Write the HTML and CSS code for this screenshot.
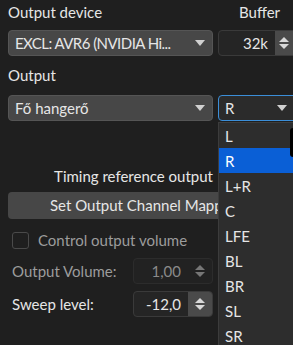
FILE: index.html
```html
<!DOCTYPE html>
<html>
<head>
<meta charset="utf-8">
<link rel="stylesheet" href="styles.css">
</head>
<body>
<div class="panel">
  <div class="grid">
    <div class="label">Output device</div>
    <div class="label center">Buffer</div>
    <div class="combo"><span class="ctext tight">EXCL: AVR6 (NVIDIA Hi...</span><span class="arrow"></span></div>
    <div class="spin dark"><span class="stext">32k</span><span class="sbtn lit"><span class="up"></span><span class="down"></span></span></div>
    <div class="label tall">Output</div>
    <div></div>
    <div class="combo"><span class="ctext">Fő hangerő</span><span class="arrow"></span></div>
    <div class="combo focus"><span class="ctext">R</span><span class="arrow"></span></div>
  </div>
  <div class="timing">Timing reference output</div>
  <div class="button">Set Output Channel Mapp</div>
  <div class="check"><span class="box"></span><span class="dim">Control output volume</span></div>
  <div class="frow">
    <span class="flabel dim">Output Volume:</span>
    <div class="spin small disabled"><span class="stext dimnum">1,00</span><span class="sbtn"><span class="up"></span><span class="down"></span></span></div>
  </div>
  <div class="frow">
    <span class="flabel">Sweep level:</span>
    <div class="spin small"><span class="stext">-12,0</span><span class="sbtn lit"><span class="up"></span><span class="down"></span></span></div>
  </div>
</div>
<div class="popup">
  <div class="item">L</div>
  <div class="item sel">R</div>
  <div class="item">L+R</div>
  <div class="item">C</div>
  <div class="item">LFE</div>
  <div class="item">BL</div>
  <div class="item">BR</div>
  <div class="item">SL</div>
  <div class="item">SR</div>
</div>
<div class="tip"></div>
</body>
</html>
```
FILE: styles.css
```css
html, body {
  margin: 0;
  padding: 0;
  background: #1f1f1f;
  width: 293px;
  height: 345px;
  overflow: hidden;
}
body {
  font-family: Lato, "Open Sans", sans-serif;
  font-size: 15px;
  color: #e6e6e6;
  position: relative;
}
.panel {
  padding: 0 0 0 8px;
  width: 285px;
}
.grid {
  display: grid;
  grid-template-columns: 205px 80px;
  column-gap: 5px;
}
.label {
  height: 30px;
  line-height: 20px;
  padding-top: 2px;
  box-sizing: border-box;
}
.label.tall {
  height: 39px;
  padding-top: 5px;
  line-height: 28px;
}
.center { text-align: left; padding-left: 21px; }
.combo {
  height: 26px;
  box-sizing: border-box;
  background: #474747;
  border: 1px solid #555;
  border-radius: 4px;
  display: flex;
  align-items: center;
  padding: 0 6px 0 6px;
  position: relative;
}
.combo.focus {
  background: #2b2b2b;
  border: 1px solid #3b8ed8;
}
.ctext { flex: 1; white-space: nowrap; overflow: hidden; }
.tight { letter-spacing: -0.55px; }
.arrow {
  width: 0; height: 0;
  border-left: 5px solid transparent;
  border-right: 5px solid transparent;
  border-top: 6px solid #d0d0d0;
  margin-right: 1px;
}
.combo.focus .arrow { margin-right: 4px; }
.spin {
  height: 26px;
  box-sizing: border-box;
  background: #252525;
  border: 1px solid #3a3a3a;
  border-radius: 4px;
  display: flex;
  align-items: stretch;
  overflow: hidden;
}
.stext {
  flex: 1;
  text-align: right;
  padding-right: 7px;
  line-height: 24px;
}
.sbtn {
  width: 24px;
  display: flex;
  flex-direction: column;
  align-items: center;
  justify-content: center;
  gap: 2px;
}
.spin.dark .sbtn { width: 18px; margin-right: 4px; }
.sbtn.lit { background: #4a4a4a; }
.up {
  width: 0; height: 0;
  border-left: 5px solid transparent;
  border-right: 5px solid transparent;
  border-bottom: 5px solid #d8d8d8;
}
.down {
  width: 0; height: 0;
  border-left: 5px solid transparent;
  border-right: 5px solid transparent;
  border-top: 5px solid #d8d8d8;
}
.disabled .up { border-bottom-color: #777; }
.disabled .down { border-top-color: #777; }
.disabled { border-color: #2c2c2c; background: #222; }
.timing {
  width: 205px;
  text-align: right;
  margin-top: 42px;
  height: 26px;
  line-height: 26px;
}
.button {
  width: 210px;
  height: 27px;
  box-sizing: border-box;
  margin-top: 3px;
  background: #474747;
  border-radius: 4px 0 0 4px;
  line-height: 27px;
  padding-left: 42px;
  white-space: nowrap;
  overflow: hidden;
}
.check {
  display: flex;
  align-items: center;
  gap: 9px;
  margin-top: 10px;
  padding-left: 4px;
  height: 22px;
}
.box {
  width: 15px; height: 15px;
  border: 1px solid #4a4a4a;
  border-radius: 3px;
  background: #1f1f1f;
}
.dim { color: #9c9c9c; }
.dimnum { color: #8a8a8a; }
.frow {
  display: flex;
  align-items: center;
  width: 205px;
  height: 26px;
  margin-top: 7px;
}
.flabel { flex: 1; padding-left: 4px; }
.spin.small { width: 80px; }
.popup {
  position: absolute;
  left: 218px;
  top: 122px;
  width: 75px;
  height: 223px;
  background: #2d2d2d;
  border: 1px solid #3c3c3c;
  border-right: 0;
  border-bottom: 0;
  box-sizing: border-box;
  overflow: hidden;
}
.item {
  height: 25px;
  line-height: 26px;
  padding-left: 6px;
}
.item.sel { background: #0a5fd6; color: #fff; }
.tip {
  position: absolute;
  left: 290px;
  top: 128px;
  width: 3px;
  height: 29px;
  background: #000;
  border-radius: 3px 0 0 3px;
}
```
